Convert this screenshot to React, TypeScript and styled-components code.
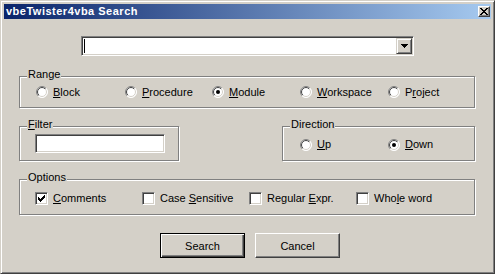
import React from "react";
import styled, { createGlobalStyle } from "styled-components";

const $face = "#d4d0c8";
const $shadow = "#808080";
const $darkShadow = "#404040";
const $highlight = "#ffffff";

const GlobalStyle = createGlobalStyle`
  html, body {
    margin: 0;
    padding: 0;
    background: ${$face};
  }
  body {
    font-family: "Liberation Sans", Arial, sans-serif;
    font-size: 11px;
    color: #000;
  }
  u {
    text-underline-offset: 1px;
  }
`;

const Window = styled.div`
  box-sizing: border-box;
  width: 495px;
  height: 274px;
  padding: 3px;
  background: ${$face};
  border: 1px solid;
  border-color: ${$face} ${$darkShadow} ${$darkShadow} ${$face};
  box-shadow: inset 1px 1px ${$highlight}, inset -1px -1px ${$shadow};
  display: flex;
  flex-direction: column;
`;

const TitleBar = styled.div`
  height: 15px;
  flex: none;
  display: flex;
  align-items: center;
  justify-content: space-between;
  padding: 0 1px 0 2px;
  background: linear-gradient(to right, #0a246a, #a6caf0);
`;

const Title = styled.span`
  color: #fff;
  font-weight: bold;
  font-size: 11px;
  letter-spacing: 0.5px;
  line-height: 15px;
`;

const CloseButton = styled.div`
  box-sizing: border-box;
  width: 12px;
  height: 11px;
  display: flex;
  align-items: center;
  justify-content: center;
  background: ${$face};
  border: 1px solid;
  border-color: ${$highlight} ${$darkShadow} ${$darkShadow} ${$highlight};
  box-shadow: inset -1px -1px ${$shadow};
`;

const Body = styled.div`
  flex: 1;
  display: flex;
  flex-direction: column;
  padding: 17px 16px 0 15px;
`;

const ComboRow = styled.div`
  display: flex;
  justify-content: center;
  margin-right: -1px;
`;

const sunken = `
  box-sizing: border-box;
  background: #fff;
  border: 1px solid;
  border-color: ${$shadow} ${$highlight} ${$highlight} ${$shadow};
  box-shadow: inset 1px 1px ${$darkShadow}, inset -1px -1px ${$face};
`;

const Combo = styled.div`
  ${sunken}
  width: 333px;
  height: 20px;
  padding: 1px;
  display: flex;
  align-items: center;
`;

const Caret = styled.span`
  width: 1px;
  height: 14px;
  margin-left: 1px;
  background: #000;
`;

const DropButton = styled.div`
  box-sizing: border-box;
  width: 16px;
  height: 16px;
  margin-left: auto;
  background: ${$face};
  border: 1px solid;
  border-color: ${$face} ${$darkShadow} ${$darkShadow} ${$face};
  box-shadow: inset 1px 1px ${$highlight}, inset -1px -1px ${$shadow};
  display: flex;
  align-items: center;
  justify-content: center;
`;

interface GroupProps {
  $width?: number;
  $height: number;
  $top: number;
  $pad: number;
}

const Group = styled.div<GroupProps>`
  position: relative;
  box-sizing: border-box;
  width: ${({ $width }) => ($width ? `${$width}px` : "auto")};
  height: ${({ $height }) => $height}px;
  margin-top: ${({ $top }) => $top}px;
  padding: 0 0 0 ${({ $pad }) => $pad}px;
  border: 1px solid ${$shadow};
  box-shadow: inset 1px 1px ${$highlight}, 1px 1px ${$highlight};
  display: flex;
  align-items: center;
`;

const Caption = styled.span`
  position: absolute;
  top: -9px;
  left: 7px;
  padding: 0 1px;
  line-height: 13px;
  background: ${$face};
`;

const GroupRow = styled.div`
  display: flex;
  justify-content: space-between;
  margin-top: 18px;
`;

interface ChoicesProps {
  $cols: string;
  $shift?: number;
}

const Choices = styled.div<ChoicesProps>`
  display: grid;
  grid-template-columns: ${({ $cols }) => $cols};
  align-items: center;
  margin-top: ${({ $shift = 0 }) => $shift}px;
`;

const Choice = styled.label`
  display: flex;
  align-items: center;
  gap: 5px;
  line-height: 13px;
  white-space: nowrap;
`;

const Box = styled.span`
  ${sunken}
  width: 13px;
  height: 13px;
  flex: none;
  display: flex;
  align-items: center;
  justify-content: center;
`;

const FilterField = styled.div`
  ${sunken}
  width: 130px;
  height: 19px;
  align-self: flex-start;
  margin-top: 7px;
`;

const ButtonRow = styled.div`
  display: flex;
  gap: 10px;
  margin-top: 18px;
  padding-left: 141px;
`;

interface ButtonProps {
  $default?: boolean;
}

const Button = styled.div<ButtonProps>`
  box-sizing: border-box;
  width: 85px;
  height: 25px;
  display: flex;
  align-items: center;
  justify-content: center;
  background: ${$face};
  border: 1px solid;
  ${({ $default }) =>
    $default
      ? `border-color: #000;
         box-shadow: inset 1px 1px ${$highlight}, inset -1px -1px ${$darkShadow}, inset -2px -2px ${$shadow};`
      : `border-color: ${$highlight} ${$darkShadow} ${$darkShadow} ${$highlight};
         box-shadow: inset -1px -1px ${$shadow};`}
`;

const RadioIcon: React.FC<{ checked?: boolean }> = ({ checked }) => (
  <svg width="12" height="12" viewBox="0 0 12 12" style={{ flex: "none" }}>
    <defs>
      <linearGradient id="rOuter" x1="0" y1="0" x2="1" y2="1">
        <stop offset="0.5" stopColor={$shadow} />
        <stop offset="0.5" stopColor={$highlight} />
      </linearGradient>
      <linearGradient id="rInner" x1="0" y1="0" x2="1" y2="1">
        <stop offset="0.5" stopColor={$darkShadow} />
        <stop offset="0.5" stopColor={$face} />
      </linearGradient>
    </defs>
    <circle cx="6" cy="6" r="5.5" fill="#fff" stroke="url(#rOuter)" />
    <circle cx="6" cy="6" r="4.5" fill="#fff" stroke="url(#rInner)" />
    {checked && <circle cx="6" cy="6" r="2" fill="#000" />}
  </svg>
);

const CheckIcon = () => (
  <svg width="7" height="7" viewBox="0 0 7 7" shapeRendering="crispEdges">
    <path
      d="M6 0h1v3h-1v1h-1v1h-1v1h-1v1h-1v-1h-1v-1h-1v-3h1v1h1v1h1v-1h1v-1h1z"
      fill="#000"
    />
  </svg>
);

const Radio: React.FC<{ checked?: boolean; children: React.ReactNode }> = ({
  checked,
  children
}) => (
  <Choice>
    <RadioIcon checked={checked} />
    <span>{children}</span>
  </Choice>
);

const Check: React.FC<{ checked?: boolean; children: React.ReactNode }> = ({
  checked,
  children
}) => (
  <Choice>
    <Box>{checked && <CheckIcon />}</Box>
    <span>{children}</span>
  </Choice>
);

const App: React.FC = () => (
  <>
    <GlobalStyle />
    <Window>
      <TitleBar>
        <Title>vbeTwister4vba Search</Title>
        <CloseButton>
          <svg width="8" height="7" viewBox="0 0 8 7" shapeRendering="crispEdges">
            <path
              d="M0 0h2v1h1v1h2v-1h1v-1h2v1h-1v1h-1v1h-1v1h1v1h1v1h1v1h-2v-1h-1v-1h-2v1h-1v1h-2v-1h1v-1h1v-1h1v-1h-1v-1h-1z"
              fill="#000"
            />
          </svg>
        </CloseButton>
      </TitleBar>
      <Body>
        <ComboRow>
          <Combo>
            <Caret />
            <DropButton>
              <svg width="7" height="4" viewBox="0 0 7 4" shapeRendering="crispEdges">
                <path d="M0 0h7v1h-1v1h-1v1h-1v1h-1v-1h-1v-1h-1v-1h-1z" fill="#000" />
              </svg>
            </DropButton>
          </Combo>
        </ComboRow>

        <Group $height={32} $top={20} $pad={16}>
          <Caption>Range</Caption>
          <Choices $cols="89px 87px 88px 88px auto">
            <Radio>
              <u>B</u>lock
            </Radio>
            <Radio>
              <u>P</u>rocedure
            </Radio>
            <Radio checked>
              <u>M</u>odule
            </Radio>
            <Radio>
              <u>W</u>orkspace
            </Radio>
            <Radio>
              P<u>r</u>oject
            </Radio>
          </Choices>
        </Group>

        <GroupRow>
          <Group $width={160} $height={35} $top={0} $pad={15}>
            <Caption>
              <u>F</u>ilter
            </Caption>
            <FilterField />
          </Group>
          <Group $width={193} $height={35} $top={0} $pad={17}>
            <Caption>Direction</Caption>
            <Choices $cols="88px auto" $shift={2}>
              <Radio>
                <u>U</u>p
              </Radio>
              <Radio checked>
                <u>D</u>own
              </Radio>
            </Choices>
          </Group>
        </GroupRow>

        <Group $height={36} $top={18} $pad={15}>
          <Caption>Options</Caption>
          <Choices $cols="107px 107px 107px auto" $shift={3}>
            <Check checked>
              <u>C</u>omments
            </Check>
            <Check>
              Case <u>S</u>ensitive
            </Check>
            <Check>
              Regular <u>E</u>xpr.
            </Check>
            <Check>
              Who<u>l</u>e word
            </Check>
          </Choices>
        </Group>

        <ButtonRow>
          <Button $default>Search</Button>
          <Button>Cancel</Button>
        </ButtonRow>
      </Body>
    </Window>
  </>
);

export default App;
